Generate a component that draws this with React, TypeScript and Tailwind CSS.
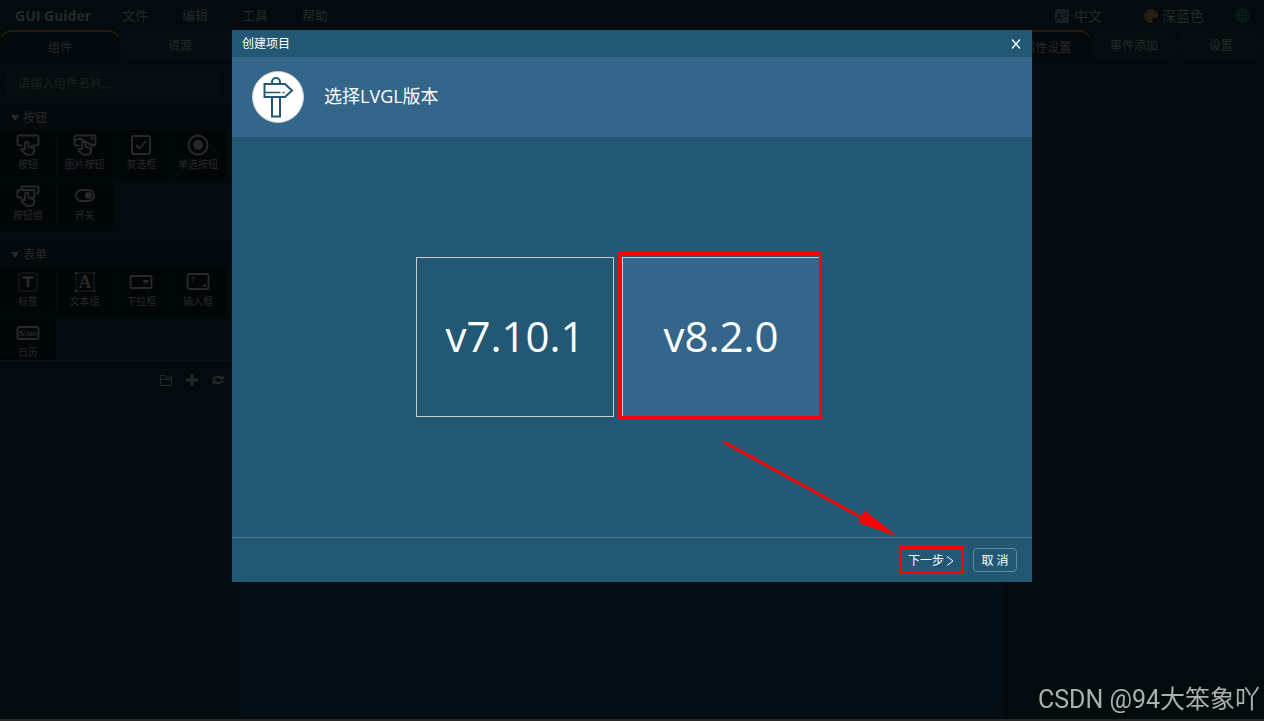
import { useState } from 'react';
import type { ReactNode } from 'react';
import { FaPalette } from 'react-icons/fa';

type Widget = { label: string; icon: ReactNode };

function Icon({ children }: { children: ReactNode }) {
  return (
    <svg
      viewBox="0 0 24 22"
      className="h-[22px] w-6"
      fill="none"
      stroke="currentColor"
      strokeWidth="1.9"
      strokeLinecap="round"
      strokeLinejoin="round"
      aria-hidden="true"
    >
      {children}
    </svg>
  );
}

// Pointing hand, filled with the cell colour so that it covers the frame behind it.
function Hand() {
  return (
    <path
      d="M9 15V9.500a1.700 1.700 0 0 1 3.400 0V13l4 .8a2 2 0 0 1 1.700 2.200l-.5 2.800a2.500 2.500 0 0 1-2.500 2H11.500a3 3 0 0 1-2.200-1L5.500 16.600a1.300 1.300 0 0 1 1.900-1.600z"
      fill="#010709"
    />
  );
}

const BUTTON_WIDGETS: Widget[] = [
  {
    label: '按钮',
    icon: (
      <Icon>
        <path d="M5.500 11.500H3.500a2 2 0 0 1-2-2V3A1.500 1.500 0 0 1 3 1.500h18A1.500 1.500 0 0 1 22.500 3v6.500a2 2 0 0 1-2 2H16" />
        <Hand />
      </Icon>
    ),
  },
  {
    label: '图片按钮',
    icon: (
      <Icon>
        <path d="M5.500 11.500H3.500a2 2 0 0 1-2-2V3A1.500 1.500 0 0 1 3 1.500h18A1.500 1.500 0 0 1 22.500 3v6.500a2 2 0 0 1-2 2H18" />
        <path d="M2 7c3-3 6-3 9-.5s6 4 10.500 4.500" />
        <circle cx="19" cy="4.500" r="1.500" strokeWidth="1.200" />
        <Hand />
      </Icon>
    ),
  },
  {
    label: '复选框',
    icon: (
      <Icon>
        <rect x="3" y="2" width="18" height="18" rx="2" />
        <path d="M7.500 11.500l3 3 6-7" />
      </Icon>
    ),
  },
  {
    label: '单选按钮',
    icon: (
      <Icon>
        <circle cx="12" cy="11" r="9.500" />
        <circle cx="12" cy="11" r="4" fill="currentColor" />
      </Icon>
    ),
  },
  {
    label: '按钮组',
    icon: (
      <Icon>
        <path d="M5.500 4V2.500a1 1 0 0 1 1-1H21.500a1 1 0 0 1 1 1V7.500a1 1 0 0 1-1 1H21" />
        <path d="M5.500 12.500H3a1.500 1.500 0 0 1-1.500-1.500V6.500A1.500 1.500 0 0 1 3 5h14A1.500 1.500 0 0 1 18.500 6.500V11A1.500 1.500 0 0 1 17 12.500h-2" />
        <Hand />
      </Icon>
    ),
  },
  {
    label: '开关',
    icon: (
      <Icon>
        <rect x="3" y="5" width="18" height="11" rx="5.500" />
        <circle cx="15.500" cy="10.500" r="2.500" fill="currentColor" />
      </Icon>
    ),
  },
];

const FORM_WIDGETS: Widget[] = [
  {
    label: '标签',
    icon: (
      <Icon>
        <rect x="3" y="2" width="18" height="18" rx="1" strokeWidth="1" strokeDasharray="1 1.500" />
        <path d="M7.500 8V6.500h9V8M12 6.500v9.500" strokeWidth="2.500" strokeLinecap="butt" />
      </Icon>
    ),
  },
  {
    label: '文本组',
    icon: (
      <Icon>
        <rect x="3" y="2" width="18" height="18" strokeWidth="1" strokeDasharray="1 1.500" />
        <path d="M3 2h.1M21 2h.1M3 20h.1M21 20h.1" strokeWidth="2.500" />
        <text
          x="12"
          y="17"
          textAnchor="middle"
          fill="currentColor"
          stroke="none"
          className="font-['Liberation_Serif',serif] text-[18px] font-bold"
        >
          A
        </text>
      </Icon>
    ),
  },
  {
    label: '下拉框',
    icon: (
      <Icon>
        <rect x="1.500" y="5" width="21" height="12" rx="1.500" />
        <path d="M14.500 9.500h5l-2.500 3z" fill="currentColor" strokeWidth="1" />
      </Icon>
    ),
  },
  {
    label: '输入框',
    icon: (
      <Icon>
        <rect x="1.500" y="3" width="21" height="15" rx="2" />
        <path d="M5.500 6.500h3M7 6.500v3.500" strokeWidth="1" />
        <path d="M20 12v4h-4z" fill="currentColor" stroke="none" />
      </Icon>
    ),
  },
  {
    label: '日历',
    icon: (
      <Icon>
        <rect x="1.500" y="5" width="21" height="12" rx="1.500" />
        <text
          x="12"
          y="13.500"
          textAnchor="middle"
          fill="currentColor"
          stroke="none"
          className="font-['Liberation_Sans',sans-serif] text-[7px] font-bold"
        >
          5/Jan
        </text>
      </Icon>
    ),
  },
];

function TabBar({ tabs }: { tabs: string[] }) {
  const [active, setActive] = useState(tabs[0]);
  return (
    <div className="flex h-[30px]" role="tablist">
      {tabs.map((tab) => (
        <button
          key={tab}
          type="button"
          role="tab"
          aria-selected={tab === active}
          onClick={() => setActive(tab)}
          className={
            tab === active
              ? 'flex-1 rounded-t-xl border-t-2 border-[#281c0d] bg-[#04090d] pt-1 text-xs'
              : 'flex-1 rounded-xl bg-[#050d11] pt-[2px] text-xs'
          }
        >
          {tab}
        </button>
      ))}
    </div>
  );
}

function WidgetGroup({ title, widgets }: { title: string; widgets: Widget[] }) {
  return (
    <section>
      <h2 className="flex h-6 items-center gap-1 bg-[#04090d] pl-[11px] text-xs">
        <svg viewBox="0 0 8 6" className="h-[6px] w-2" fill="currentColor" aria-hidden="true">
          <path d="M0 0h8L4 6z" />
        </svg>
        {title}
      </h2>
      <div className="grid w-[226px] grid-cols-4 gap-px">
        {widgets.map((w) => (
          <button
            key={w.label}
            type="button"
            className="flex h-[50px] flex-col items-center bg-[#010709] pt-1 text-[10px] leading-4"
          >
            {w.icon}
            {w.label}
          </button>
        ))}
      </div>
    </section>
  );
}

function TopBar() {
  return (
    <header className="flex h-[30px] items-center pt-px pr-[14px]">
      <h1 className="w-[105px] pl-[15px] text-sm font-bold whitespace-nowrap">GUI Guider</h1>
      <nav className="flex flex-1 text-[13px]">
        {['文件', '编辑', '工具', '帮助'].map((item) => (
          <button key={item} type="button" className="w-15">
            {item}
          </button>
        ))}
      </nav>
      <button type="button" className="mr-[42px] flex items-center gap-[5px] text-sm">
        <svg viewBox="0 0 14 14" className="size-[14px]" aria-hidden="true">
          <rect width="14" height="14" rx="2" fill="#172026" />
          <text x="1" y="11" fill="#04090d" className="text-[9px] font-bold">
            A
          </text>
          <text x="8" y="7" fill="#04090d" className="text-[5px]">
            文
          </text>
        </svg>
        中文
      </button>
      <button type="button" className="mr-[31px] flex items-center gap-1 text-sm">
        <FaPalette className="size-[14px] text-[#2a2113]" aria-hidden="true" />
        深蓝色
      </button>
      <button type="button" aria-label="Website">
        <svg viewBox="0 0 16 16" className="size-[15px]" fill="none" stroke="#04291a" aria-hidden="true">
          <circle cx="8" cy="8" r="7.200" />
          <ellipse cx="8" cy="8" rx="3.500" ry="7.200" />
          <path d="M8 .8v14.400M.8 8h14.400M2 4.500h12M2 11.500h12" />
        </svg>
      </button>
    </header>
  );
}

function Sidebar() {
  return (
    <aside className="flex w-60 flex-col">
      <TabBar tabs={['组件', '资源']} />
      <div className="flex h-[300px] flex-col overflow-hidden">
        <div className="pt-[10px] pr-5 pb-[10px] pl-[6px]">
          <input
            type="text"
            aria-label="请输入组件名称"
            placeholder="请输入组件名称..."
            className="h-6 w-full border border-[#080e11] bg-[#060d10] px-[11px] text-xs placeholder:text-[#1b1f20]"
          />
        </div>
        <div className="flex flex-col gap-3">
          <WidgetGroup title="按钮" widgets={BUTTON_WIDGETS} />
          <WidgetGroup title="表单" widgets={FORM_WIDGETS} />
        </div>
      </div>
      <div className="flex h-[38px] items-center justify-end gap-3 border-t border-[#0a1114] pr-[15px]">
        <button type="button" aria-label="Open folder">
          <svg viewBox="0 0 14 14" className="size-[14px]" fill="none" stroke="currentColor" aria-hidden="true">
            <path d="M1.500 12.500v-10h4l1.500 2h5.500v8zM1.500 6.500h11" />
          </svg>
        </button>
        <button type="button" aria-label="Add">
          <svg viewBox="0 0 14 14" className="size-[14px]" stroke="currentColor" strokeWidth="3" aria-hidden="true">
            <path d="M7 1v12M1 7h12" />
          </svg>
        </button>
        <button type="button" aria-label="Refresh">
          <svg viewBox="0 0 14 14" className="size-[14px]" fill="none" stroke="currentColor" strokeWidth="2" aria-hidden="true">
            <path d="M2 6.500C3 4 6 3.500 10 4.500M12 7.500C11 10 8 10.500 4 9.500" />
            <path d="M12.500 2v4.500H8zM1.500 12V7.500H6z" fill="currentColor" stroke="none" />
          </svg>
        </button>
      </div>
    </aside>
  );
}

function SignpostBadge() {
  return (
    <svg viewBox="0 0 52 52" className="size-[52px]" fill="none" stroke="#225873" strokeWidth="2" aria-hidden="true">
      <circle cx="26" cy="26" r="25.500" fill="#fff" stroke="#c9ced3" strokeWidth="1" />
      <path d="M20 12.500V11a4 4 0 0 1 8 0v1.500" />
      <path d="M12.500 13h20.500l7 6.500-7 6.500H12.500z" />
      <path d="M13 21.500h15.500M30.500 21.500h2" strokeWidth="1.500" />
      <path d="M20 26v19.500h8V26" />
    </svg>
  );
}

function VersionTile({
  version,
  selected,
  onSelect,
}: {
  version: string;
  selected: boolean;
  onSelect: () => void;
}) {
  return (
    <div className="relative">
      <button
        type="button"
        aria-pressed={selected}
        onClick={onSelect}
        className={
          selected
            ? 'h-40 w-[198px] border border-[#c8cdd0] bg-[#34658a] pb-1 text-[42px]'
            : 'h-40 w-[198px] border border-[#c8cdd0] pb-1 text-[42px]'
        }
      >
        {version}
      </button>
      {selected && (
        <span className="pointer-events-none absolute -top-[5px] -right-[2px] -bottom-[2px] -left-1 border-[3px] border-l-4 border-[#ff0000]" />
      )}
    </div>
  );
}

function CreateProjectDialog() {
  const [version, setVersion] = useState('v8.2.0');

  return (
    <div
      role="dialog"
      aria-label="创建项目"
      className="relative flex w-[800px] flex-col bg-[#225873] text-white"
    >
      <div className="flex h-[27px] items-center justify-between pr-[11px] pl-[10px] text-xs">
        创建项目
        <button type="button" aria-label="关闭">
          <svg viewBox="0 0 10 10" className="size-[10px]" stroke="currentColor" strokeWidth="1.200" aria-hidden="true">
            <path d="M1 .5l8 9M9 .5l-8 9" />
          </svg>
        </button>
      </div>
      <div className="flex h-20 items-center gap-5 bg-[#34658a] pl-5 text-lg">
        <SignpostBadge />
        <h2 className="pb-[2px]">选择LVGL版本</h2>
      </div>
      <div className="flex h-[400px] items-center justify-center gap-2 pr-7">
        {['v7.10.1', 'v8.2.0'].map((v) => (
          <VersionTile key={v} version={v} selected={v === version} onSelect={() => setVersion(v)} />
        ))}
      </div>
      <div className="flex h-[45px] items-center justify-end gap-3 border-t border-[#4b7d92] pr-[15px] text-xs">
        <div className="relative">
          <button type="button" className="flex h-6 w-15 items-center justify-center gap-[2px] pt-px">
            下一步
            <svg viewBox="0 0 8 10" className="h-[10px] w-2" fill="none" stroke="currentColor" aria-hidden="true">
              <path d="M1 .5L7 5 1 9.500" />
            </svg>
          </button>
          <span className="pointer-events-none absolute -top-[2px] -right-[3px] -bottom-[2px] -left-[2px] border-[3px] border-[#ff0000]" />
        </div>
        <button type="button" className="h-6 w-11 rounded border border-[#648a9d] pt-px">
          取 消
        </button>
      </div>
      {/* arrow from the chosen version down to the next button */}
      <svg
        viewBox="0 0 172 95"
        className="pointer-events-none absolute top-[410px] left-[491px] h-[95px] w-[172px]"
        fill="#ff0000"
        stroke="#ff0000"
        strokeLinecap="round"
        strokeLinejoin="round"
        aria-hidden="true"
      >
        <path d="M2 2.500l140 77" strokeWidth="3" />
        <path d="M142 72l28 22-33-12z" strokeWidth="2" />
      </svg>
    </div>
  );
}

export default function App() {
  return (
    <div className="flex min-h-screen flex-col bg-[#030b0e] font-['Open_Sans','Noto_Sans_CJK_SC',sans-serif] text-[#27292a]">
      <TopBar />
      <main className="flex flex-1">
        <Sidebar />
        <div className="flex-1 bg-[#050d15]" />
        <aside className="w-[260px]">
          <TabBar tabs={['属性设置', '事件添加', '设置']} />
        </aside>
      </main>
      <footer className="h-[2px] bg-[#2a2728]" />

      <div className="fixed inset-0 flex items-start justify-center pt-[30px]">
        <CreateProjectDialog />
      </div>
      <p className="fixed right-1 bottom-[3px] font-['Roboto','Noto_Sans_CJK_SC',sans-serif] text-[25px] leading-9 text-[#abafb0]">
        CSDN @94大笨象吖
      </p>
    </div>
  );
}
